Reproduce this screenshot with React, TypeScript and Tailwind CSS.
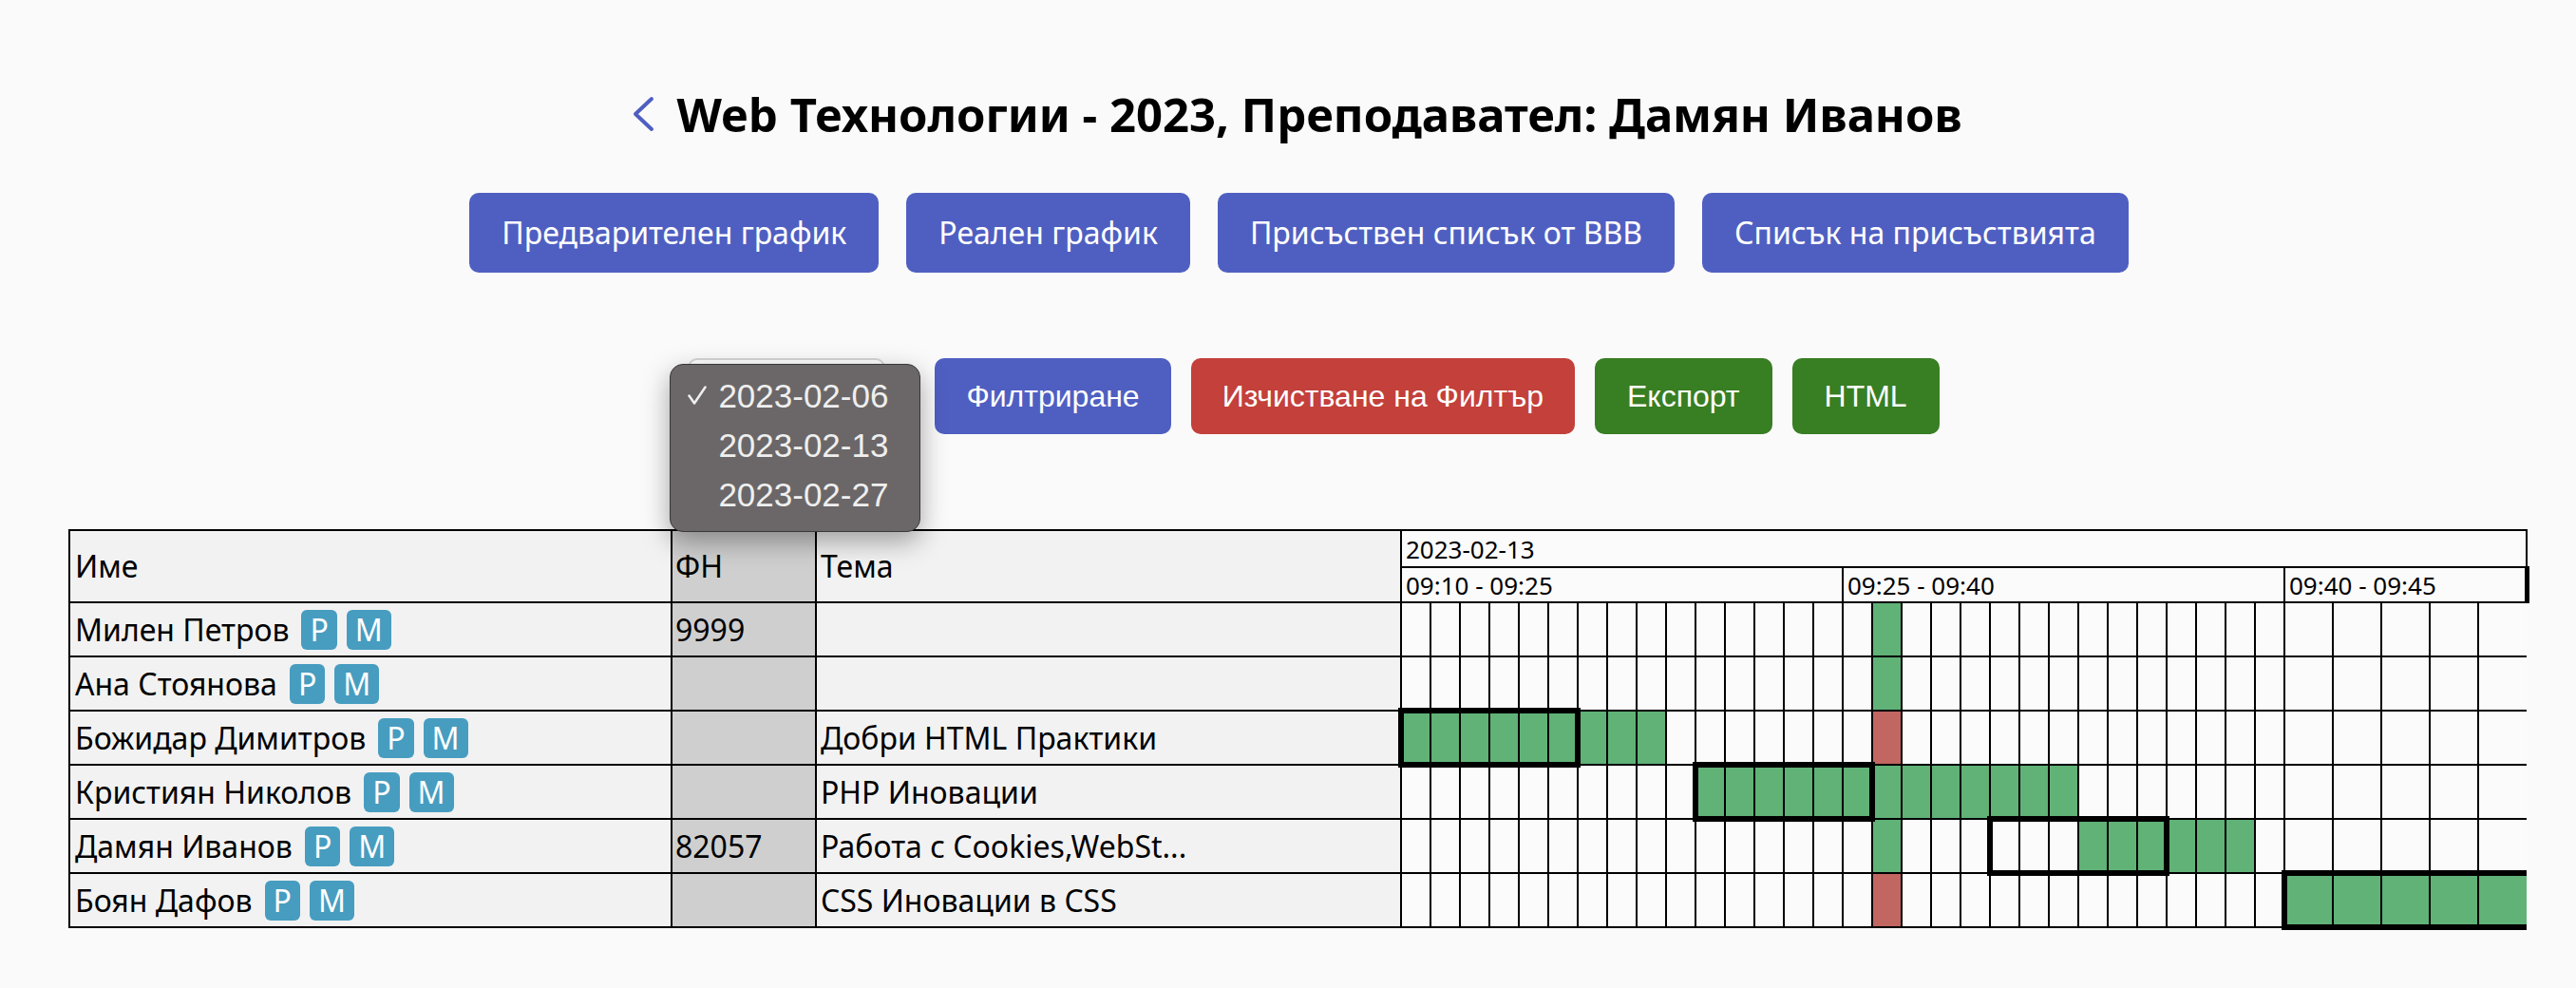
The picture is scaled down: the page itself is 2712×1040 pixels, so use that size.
import React from 'react';

type Row = {
  name: string;
  fn: string;
  topic: string;
  green: number[];
  red: number[];
  box: [number, number] | null;
};

function range(a: number, b: number): number[] {
  const r: number[] = [];
  for (let i = a; i <= b; i++) r.push(i);
  return r;
}

const rows: Row[] = [
  { name: 'Милен Петров', fn: '9999', topic: '', green: [16], red: [], box: null },
  { name: 'Ана Стоянова', fn: '', topic: '', green: [16], red: [], box: null },
  { name: 'Божидар Димитров', fn: '', topic: 'Добри HTML Практики', green: range(0, 8), red: [16], box: [0, 5] },
  { name: 'Кристиян Николов', fn: '', topic: 'PHP Иновации', green: range(10, 22), red: [], box: [10, 15] },
  { name: 'Дамян Иванов', fn: '82057', topic: 'Работа с Cookies,WebSt...', green: [16, ...range(23, 28)], red: [], box: [20, 25] },
  { name: 'Боян Дафов', fn: '', topic: 'CSS Иновации в CSS', green: range(30, 34), red: [16], box: [30, 34] },
];

const cols = range(0, 34);

function Badge({ children }: { children: React.ReactNode }) {
  return (
    <span className="inline-flex h-[42px] items-center rounded-[6px] bg-[#479dc0] px-[9px] text-[32px] leading-none text-white">
      {children}
    </span>
  );
}

function Cell({ row, i }: { row: Row; i: number }) {
  const inBox = row.box !== null && i >= row.box[0] && i <= row.box[1];
  const first = row.box !== null && i === row.box[0];
  const last = row.box !== null && i === row.box[1];
  const isGreen = row.green.includes(i);
  const isRed = row.red.includes(i);
  const bg = isGreen ? 'bg-[#60b277]' : isRed ? 'bg-[#c16661]' : 'bg-[#fbfbfb]';
  return (
    <td
      className={[
        'border-2 border-black p-0',
        bg,
        inBox ? 'border-t-[6px] border-b-[6px]' : '',
        first ? 'border-l-[6px]' : '',
        last && i !== 34 ? 'border-r-[6px]' : '',
        i === 34 ? 'border-r-0' : '',
      ].join(' ')}
    />
  );
}

export default function App() {
  return (
    <div className="min-h-screen bg-[#fafafa] font-['Noto_Sans',sans-serif] text-black">
      {/* Title */}
      <div className="flex justify-center pl-[19px] pt-[91px]">
        <div className="flex h-[58px] items-center">
          <svg width="24" height="40" viewBox="0 0 24 40" className="shrink-0">
            <polyline
              points="21,4 4,20 21,36"
              fill="none"
              stroke="#4f5fc1"
              strokeWidth="4"
              strokeLinecap="round"
              strokeLinejoin="round"
            />
          </svg>
          <h1 className="ml-[23px] text-[49px] font-bold leading-[58px]">
            Web Технологии - 2023, Преподавател: Дамян Иванов
          </h1>
        </div>
      </div>

      {/* Top buttons */}
      <div className="mt-[54px] flex justify-center gap-[29px] pl-[23px]">
        {['Предварителен график', 'Реален график', 'Присъствен списък от BBB', 'Списък на присъствията'].map((t) => (
          <button
            key={t}
            className="h-[84px] rounded-[10px] bg-[#4f5fc1] px-[34px] text-[32px] leading-none text-white"
          >
            {t}
          </button>
        ))}
      </div>

      {/* Filter row */}
      <div className="mt-[90px] flex items-center justify-center pl-[54px]">
        <div className="relative h-[80px] w-[208px] rounded-[10px] border-2 border-[#d6d6d6] bg-white">
          <div className="absolute left-[-21px] top-[4px] z-10 h-[177px] w-[264px] rounded-[14px] border border-[#3a3839] bg-[#6b6768] pt-[6px] font-['Liberation_Sans',sans-serif] text-[35px] leading-none text-[#efefef] shadow-[0_10px_28px_rgba(0,0,0,0.35)]">
            {['2023-02-06', '2023-02-13', '2023-02-27'].map((d, idx) => (
              <div key={d} className="flex h-[52px] items-center">
                <div className="flex w-[50px] justify-start pl-[18px]">
                  {idx === 0 ? (
                    <svg width="20" height="20" viewBox="0 0 20 20">
                      <polyline
                        points="1.5,10.5 7,18.5 18.5,1.5"
                        fill="none"
                        stroke="#efefef"
                        strokeWidth="2.5"
                        strokeLinecap="round"
                        strokeLinejoin="round"
                      />
                    </svg>
                  ) : null}
                </div>
                <span>{d}</span>
              </div>
            ))}
          </div>
        </div>
        <div className="ml-[52px] flex gap-[21px] font-['Liberation_Sans',sans-serif]">
          <button className="h-[80px] rounded-[10px] bg-[#4f5fc1] px-[33px] text-[32px] leading-none text-white">
            Филтриране
          </button>
          <button className="h-[80px] rounded-[10px] bg-[#c3403b] px-[33px] text-[32px] leading-none text-white">
            Изчистване на Филтър
          </button>
          <button className="h-[80px] rounded-[10px] bg-[#387e23] px-[34px] text-[32px] leading-none text-white">
            Експорт
          </button>
          <button className="h-[80px] rounded-[10px] bg-[#387e23] px-[34px] text-[32px] leading-none text-white">
            HTML
          </button>
        </div>
      </div>

      {/* Table */}
      <div className="mt-[100px] pl-[72px]">
        <table className="w-[2589px] table-fixed border-collapse">
          <colgroup>
            <col className="w-[634px]" />
            <col className="w-[152px]" />
            <col className="w-[616px]" />
            {cols.map((i) => (
              <col key={i} className={i >= 30 ? 'w-[51px]' : 'w-[31px]'} />
            ))}
          </colgroup>
          <thead>
            <tr className="h-[39px]">
              <th rowSpan={2} className="border-2 border-black bg-[#f2f2f2] px-[5px] py-0 text-left text-[32px] font-normal">
                Име
              </th>
              <th rowSpan={2} className="border-2 border-black bg-[#cfcfcf] px-[3px] py-0 text-left text-[32px] font-normal">
                ФН
              </th>
              <th rowSpan={2} className="border-2 border-black bg-[#f2f2f2] px-[4px] py-0 text-left text-[32px] font-normal">
                Тема
              </th>
              <th colSpan={35} className="border-2 border-black bg-[#fbfbfb] px-[4px] py-0 text-left text-[26px] font-normal leading-[30px]">
                2023-02-13
              </th>
            </tr>
            <tr className="h-[37px]">
              <th colSpan={15} className="border-2 border-black bg-[#fbfbfb] px-[4px] py-0 text-left text-[26px] font-normal leading-[30px]">
                09:10 - 09:25
              </th>
              <th colSpan={15} className="border-2 border-black bg-[#fbfbfb] px-[4px] py-0 text-left text-[26px] font-normal leading-[30px]">
                09:25 - 09:40
              </th>
              <th colSpan={5} className="border-2 border-r-[5px] border-black bg-[#fbfbfb] px-[4px] py-0 text-left text-[26px] font-normal leading-[30px]">
                09:40 - 09:45
              </th>
            </tr>
          </thead>
          <tbody>
            {rows.map((row) => (
              <tr key={row.name} className="h-[57px]">
                <td className="border-2 border-black bg-[#f2f2f2] px-[5px] py-0 text-[32px]">
                  <div className="flex items-center whitespace-nowrap">
                    <span>{row.name}</span>
                    <span className="ml-[13px]">
                      <Badge>P</Badge>
                    </span>
                    <span className="ml-[10px]">
                      <Badge>M</Badge>
                    </span>
                  </div>
                </td>
                <td className="border-2 border-black bg-[#cfcfcf] px-[3px] py-0 text-[32px]">{row.fn}</td>
                <td className="border-2 border-black bg-[#f2f2f2] px-[4px] py-0 text-[32px] whitespace-nowrap">
                  {row.topic}
                </td>
                {cols.map((i) => (
                  <Cell key={i} row={row} i={i} />
                ))}
              </tr>
            ))}
          </tbody>
        </table>
      </div>
    </div>
  );
}
